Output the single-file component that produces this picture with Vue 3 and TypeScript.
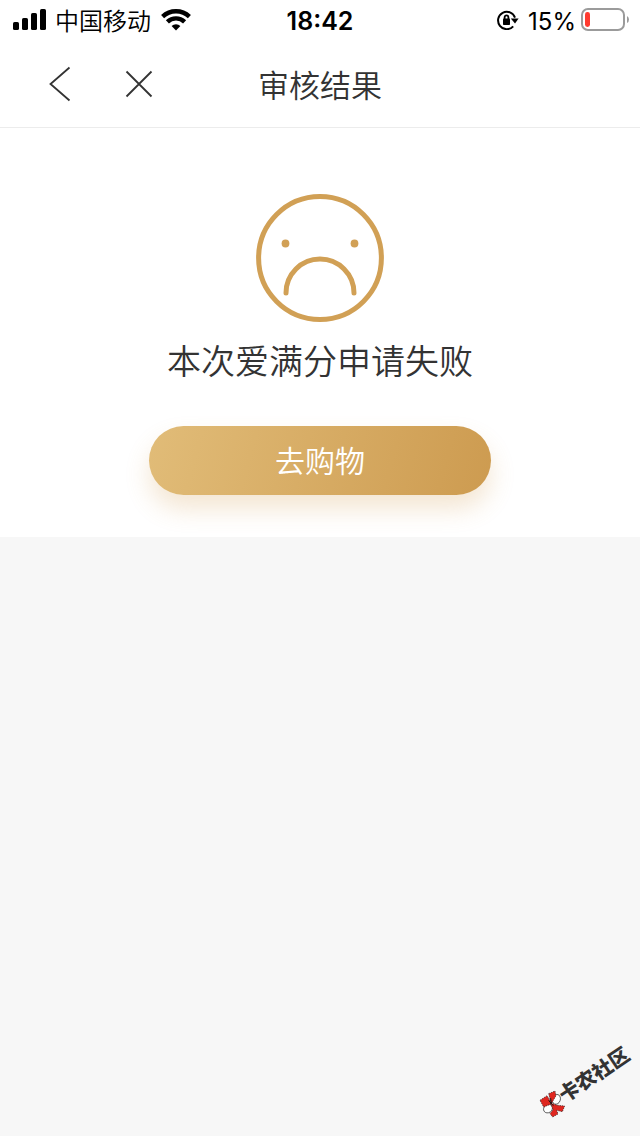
<script setup lang="ts">
interface Status {
  carrier: string
  time: string
  battery: number
}

const status: Status = { carrier: '中国移动', time: '18:42', battery: 15 }
const title = '审核结果'
const message = '本次爱满分申请失败'
const action = '去购物'
const community = '卡农社区'
</script>

<template>
  <div class="page">
    <div class="status-bar">
      <div class="status-left">
        <svg class="signal" width="34" height="22" viewBox="0 0 34 22" aria-hidden="true">
          <rect x="0" y="13" width="6" height="8" rx="1.6" />
          <rect x="9" y="9" width="6" height="12" rx="1.6" />
          <rect x="18" y="4" width="6" height="17" rx="1.6" />
          <rect x="27" y="0" width="6" height="21" rx="1.6" />
        </svg>
        <span class="carrier">{{ status.carrier }}</span>
        <svg class="wifi" width="30" height="22" viewBox="0 0 30 22" aria-hidden="true">
          <path d="M1.6 7.6 A19.5 19.5 0 0 1 28.4 7.6" />
          <path d="M6.4 12.8 A12.4 12.4 0 0 1 23.6 12.8" />
          <path class="solid" d="M15 21.4 L10.6 17 A6.4 6.4 0 0 1 19.4 17 Z" />
        </svg>
      </div>
      <span class="time">{{ status.time }}</span>
      <div class="status-right">
        <svg class="lock" width="22" height="20" viewBox="0 0 22 20" aria-hidden="true">
          <path class="ring" d="M16.2 16.3 A8.7 8.7 0 1 1 18 7.6" />
          <path d="M13.8 8.6 H21.6 L18 13.4 Z" />
          <rect x="6" y="8.4" width="7" height="6.6" rx="0.8" />
          <path class="shackle" d="M7.6 9 V7.4 A1.9 2 0 0 1 11.4 7.4 V9" />
        </svg>
        <span class="percent">{{ status.battery }}%</span>
        <svg class="battery" width="48" height="24" viewBox="0 0 48 24" aria-hidden="true">
          <rect class="shell" x="1" y="1" width="42" height="21" rx="6" />
          <rect class="charge" x="4" y="4" width="5" height="15" rx="2.4" />
          <path class="cap" d="M46 8 Q48 9 48 11.5 Q48 14 46 15 Z" />
        </svg>
      </div>
    </div>

    <header class="nav-bar">
      <div class="nav-actions">
        <button type="button" class="icon-button" aria-label="返回">
          <svg width="22" height="36" viewBox="0 0 22 36"><path d="M20.5 1.5 L1.5 18 L20.5 34.5" /></svg>
        </button>
        <button type="button" class="icon-button" aria-label="关闭">
          <svg width="28" height="28" viewBox="0 0 28 28"><path d="M1.5 1.5 L26.5 26.5 M26.5 1.5 L1.5 26.5" /></svg>
        </button>
      </div>
      <h1 class="title">{{ title }}</h1>
    </header>

    <main class="result">
      <svg class="sad-face" width="128" height="128" viewBox="0 0 128 128" aria-hidden="true">
        <circle class="line" cx="64" cy="64" r="61.4" />
        <circle class="eye" cx="29.5" cy="49.5" r="3.9" />
        <circle class="eye" cx="98.5" cy="49.5" r="3.9" />
        <path class="line" d="M30 99 A34 34 0 0 1 98 99" />
      </svg>
      <p class="message">{{ message }}</p>
      <button type="button" class="primary">{{ action }}</button>
    </main>

    <svg class="watermark" width="110" height="95" viewBox="0 0 330 285">
      <ellipse class="petal" cx="79" cy="193" rx="12" ry="15" transform="rotate(20 79 193)" />
      <ellipse class="petal" cx="54" cy="221" rx="14" ry="12" transform="rotate(-35 54 221)" />
      <path class="leaf" d="M30 196 L51 182 L66 206 L41 216 Z" />
      <path class="leaf" d="M56 176 L75 168 L78 182 L64 206 Z" />
      <path class="leaf" d="M62 204 L82 211 L104 213 L97 230 L80 226 L84 237 L68 246 L60 236 L69 224 Z" />
      <path class="vein" d="M56 196 L64 206 L70 212 M62 190 L64 206" />
      <text x="105" y="204" transform="rotate(-34 105 204)">{{ community }}</text>
    </svg>
  </div>
</template>

<style>
body {
  margin: 0;
  background: #f7f7f7;
}
</style>

<style scoped>
.page {
  position: relative;
  min-height: 100vh;
  background: #f7f7f7;
  color: #333;
  font-family: Inter, "Noto Sans CJK SC", sans-serif;
}

.status-bar {
  display: grid;
  grid-template-columns: 1fr auto 1fr;
  align-items: center;
  height: 40px;
  padding: 0 12px;
  background: #fff;
  color: #000;
  font-size: 24px;
  line-height: 36px;
}

.status-left,
.status-right {
  display: flex;
  align-items: center;
}

.status-left {
  padding-left: 1px;
}

.status-right {
  justify-content: flex-end;
  margin-right: -1px;
}

.carrier,
.percent {
  padding-top: 3px;
}

.carrier {
  margin: 0 10px 0 8px;
  font-weight: 350;
}

.wifi path {
  fill: none;
  stroke: #000;
  stroke-width: 4.4;
}

.wifi .solid {
  fill: #000;
  stroke: none;
}

.time {
  padding-top: 1px;
  font-size: 25px;
  font-weight: 600;
}

.lock {
  margin-right: 9px;
}

.lock .ring {
  fill: none;
  stroke: #000;
  stroke-width: 2;
}

.lock .shackle {
  fill: none;
  stroke: #000;
  stroke-width: 1.8;
}

.percent {
  margin-right: 5px;
}

.shell {
  fill: none;
  stroke: #9b9b9b;
  stroke-width: 2;
}

.charge {
  fill: #ff3b30;
}

.cap {
  fill: #9b9b9b;
}

.nav-bar {
  display: grid;
  grid-template-columns: 1fr auto 1fr;
  align-items: center;
  height: 87px;
  border-bottom: 1px solid #ececec;
  background: #fff;
}

.nav-actions {
  display: flex;
  align-items: center;
  gap: 54px;
  padding-left: 49px;
}

.icon-button {
  display: flex;
  padding: 0;
  border: 0;
  background: none;
}

.icon-button path {
  fill: none;
  stroke: #333;
  stroke-width: 1.8;
}

.title {
  margin: 0;
  padding-top: 4px;
  font-size: 31px;
  font-weight: 350;
  line-height: 48px;
}

.result {
  display: flex;
  flex-direction: column;
  align-items: center;
  padding: 66px 24px 42px;
  background: #fff;
}

.sad-face .line {
  fill: none;
  stroke: #d1a055;
  stroke-width: 5;
  stroke-linecap: round;
}

.sad-face .eye {
  fill: #d1a055;
}

.message {
  margin: 14px 0 38px;
  font-size: 34px;
  font-weight: 350;
  line-height: 52px;
}

.primary {
  width: 342px;
  max-width: 100%;
  height: 69px;
  padding: 0;
  border: 0;
  border-radius: 35px;
  background: linear-gradient(105deg, #e1bc78, #cd9b50);
  box-shadow: 0 14px 24px rgba(209, 150, 70, 0.24);
  color: #fff;
  font-family: inherit;
  font-size: 30px;
  font-weight: 350;
  line-height: 66px;
}

.watermark {
  position: absolute;
  right: 0;
  bottom: 6px;
}

.watermark text {
  fill: #333;
  font-size: 60px;
  font-weight: 900;
}

.petal {
  fill: #fff;
  stroke: #222;
  stroke-width: 2;
}

.leaf {
  fill: #df2720;
  stroke: #222;
  stroke-width: 2;
  stroke-dasharray: 4 3;
}

.vein {
  fill: none;
  stroke: #111;
  stroke-width: 3;
}
</style>
